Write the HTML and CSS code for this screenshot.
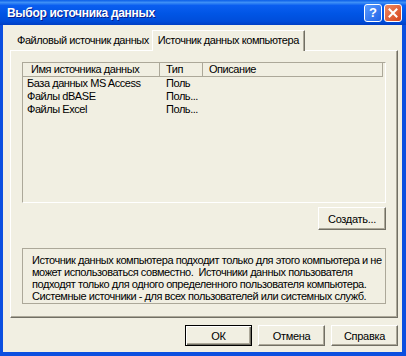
FILE: index.html
```html
<!DOCTYPE html>
<html lang="ru">

<head>
  <meta charset="UTF-8">
  <title>Выбор источника данных</title>

  <link rel="stylesheet" href="styles.css">

</head>

<body>
  <!-- ОКНО ДИАЛОГА -->
  <div class="okno">
    <div class="zagolovok">
      <span class="zagolovok-tekst">Выбор источника данных</span>
      <div class="knopki-okna">
        <div class="kn-okna kn-help">?</div>
        <div class="kn-okna kn-close">
          <svg width="10" height="10" viewBox="0 0 10 10">
            <path d="M1.5 1.5 L8.5 8.5 M8.5 1.5 L1.5 8.5" stroke="#fff" stroke-width="2" stroke-linecap="square" />
          </svg>
        </div>
      </div>
    </div>

    <div class="ramka">
      <div class="dialog">
        <!-- ВКЛАДКИ -->
        <div class="vkladki">
          <div class="vkladka">Файловый источник данных</div>
          <div class="vkladka aktivnaya">Источник данных компьютера</div>
        </div>

        <div class="panel">
          <!-- СПИСОК ИСТОЧНИКОВ -->
          <div class="spisok">
            <div class="stroka shapka">
              <div class="kol kol-imya">Имя источника данных</div>
              <div class="kol kol-tip">Тип</div>
              <div class="kol kol-opis">Описание</div>
            </div>
            <div class="stroka">
              <div class="kol kol-imya">База данных MS Access</div>
              <div class="kol kol-tip">Поль</div>
              <div class="kol kol-opis"></div>
            </div>
            <div class="stroka">
              <div class="kol kol-imya">Файлы dBASE</div>
              <div class="kol kol-tip">Поль...</div>
              <div class="kol kol-opis"></div>
            </div>
            <div class="stroka">
              <div class="kol kol-imya">Файлы Excel</div>
              <div class="kol kol-tip">Поль...</div>
              <div class="kol kol-opis"></div>
            </div>
          </div>

          <div class="ryad-sozdat">
            <button class="knopka kn-sozdat">Создать...</button>
          </div>

          <div class="opisanie">
            Источник данных компьютера подходит только для этого компьютера и не<br>
            может использоваться совместно.&nbsp; Источники данных пользователя<br>
            подходят только для одного определенного пользователя компьютера.<br>
            Системные источники - для всех пользователей или системных служб.
          </div>
        </div>

        <!-- КНОПКИ ДИАЛОГА -->
        <div class="knopki">
          <button class="knopka po-umolch">ОК</button>
          <button class="knopka">Отмена</button>
          <button class="knopka">Справка</button>
        </div>
      </div>
    </div>
  </div>
</body>

</html>
```

FILE: styles.css
```css
/* ОБЩИЕ СТИЛИ */
* {
  box-sizing: border-box;
}

body {
  margin: 0;
  font-family: "Liberation Sans", Arial, sans-serif;
  font-size: 11px;
  letter-spacing: -0.45px;
  color: #000;
}

.okno {
  width: 406px;
  height: 356px;
  display: flex;
  flex-direction: column;
}

/* ЗАГОЛОВОК ОКНА */
.zagolovok {
  flex-shrink: 0;
  height: 25px;
  display: flex;
  align-items: center;
  justify-content: space-between;
  padding: 0 4px 0 7px;
  background: linear-gradient(to bottom, #0a5ee8 0%, #3d8ff6 10%, #0a5ef0 22%, #0055e5 55%, #004dda 85%, #003fc4 100%);
}

.zagolovok-tekst {
  color: #fff;
  font-weight: bold;
  font-size: 12px;
  letter-spacing: -0.3px;
  text-shadow: 1px 1px #0a1e8c;
}

.knopki-okna {
  display: flex;
  gap: 2px;
}

.kn-okna {
  width: 18px;
  height: 18px;
  border: 1px solid #fff;
  border-radius: 3px;
  display: flex;
  align-items: center;
  justify-content: center;
  color: #fff;
  font-weight: bold;
  font-size: 13px;
  letter-spacing: 0;
}

.kn-help {
  background: linear-gradient(135deg, #5a9cff, #1f62e6);
}

.kn-close {
  background: linear-gradient(135deg, #f08a62, #d5441c);
}

/* РАМКА И ТЕЛО ДИАЛОГА */
.ramka {
  flex: 1;
  display: flex;
  background: #0b4fe0;
  padding: 0 4px 4px 3px;
}

.dialog {
  flex: 1;
  background: #f1efe2;
  display: flex;
  flex-direction: column;
  padding: 5px 4px 0 7px;
}

/* ВКЛАДКИ */
.vkladki {
  display: flex;
  align-items: flex-end;
  height: 20px;
  flex-shrink: 0;
}

.vkladka {
  height: 18px;
  line-height: 16px;
  padding: 0 3px 0 7px;
  white-space: nowrap;
}

.vkladka.aktivnaya {
  height: 21px;
  line-height: 19px;
  padding: 0 5px 0 5px;
  border-top: 1px solid #fff;
  border-left: 1px solid #fff;
  border-right: 1px solid #716f64;
  box-shadow: inset -1px 0 #aca899;
  margin-bottom: -1px;
  position: relative;
  background: #f1efe2;
}

.panel {
  flex-shrink: 0;
  height: 268px;
  border-top: 1px solid #fff;
  border-left: 1px solid #fff;
  border-right: 1px solid #716f64;
  border-bottom: 1px solid #716f64;
  box-shadow: inset -1px -1px #aca899;
  padding: 11px 11px 0 11px;
  display: flex;
  flex-direction: column;
}

/* СПИСОК */
.spisok {
  width: 364px;
  height: 141px;
  border-top: 1px solid #aca899;
  border-left: 1px solid #aca899;
  border-right: 1px solid #fff;
  border-bottom: 1px solid #fff;
}

.stroka {
  display: flex;
  height: 13px;
  line-height: 13px;
}

.stroka.shapka {
  height: 14px;
  border-bottom: 1px solid #aca899;
  width: 360px;
}

.kol {
  white-space: nowrap;
  overflow: hidden;
}

.kol-imya {
  width: 137px;
  padding-left: 4px;
}

.kol-tip {
  width: 43px;
  padding-left: 6px;
}

.kol-opis {
  flex: 1;
  padding-left: 6px;
}

.shapka .kol {
  border-right: 1px solid #aca899;
}

.shapka .kol-imya {
  padding-left: 8px;
}

/* КНОПКИ */
.knopka {
  font-family: "Liberation Sans", Arial, sans-serif;
  font-size: 11px;
  letter-spacing: -0.3px;
  color: #000;
  width: 67px;
  height: 21px;
  padding: 0;
  background: #f1efe2;
  border: 1px solid;
  border-color: #fff #716f64 #716f64 #fff;
  box-shadow: inset -1px -1px #aca899;
}

.ryad-sozdat {
  display: flex;
  justify-content: flex-end;
  width: 364px;
  margin-top: 4px;
}

.kn-sozdat {
  width: 68px;
  height: 23px;
}

.opisanie {
  margin-top: 18px;
  width: 364px;
  height: 56px;
  border: 1px solid #aca899;
  padding: 5px 0 0 9px;
  line-height: 12px;
  white-space: nowrap;
}

.knopki {
  flex-shrink: 0;
  display: flex;
  justify-content: flex-end;
  gap: 6px;
  margin-top: 7px;
}

.knopka.po-umolch {
  border: 1px solid #000;
  box-shadow: inset 1px 1px #fff, inset -1px -1px #716f64, inset -2px -2px #aca899;
}
```
